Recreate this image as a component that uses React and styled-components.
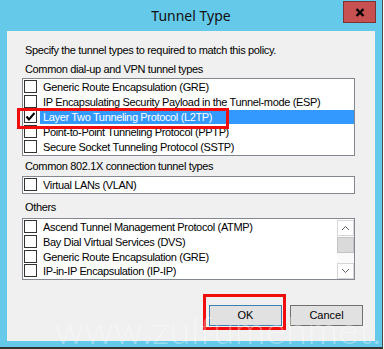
import React from "react";
import styled, { createGlobalStyle } from "styled-components";

const Global = createGlobalStyle`
  html, body { margin: 0; padding: 0; background: #ffffff; }
  body { font-family: "Liberation Sans", Arial, sans-serif; }
`;

const Window = styled.div`
  position: relative;
  width: 382px;
  height: 347px;
  background: #65c9ea;
  border-right: 1px solid #4a4a4a;
  border-bottom: 2px solid #333333;
  display: flex;
  flex-direction: column;
  overflow: hidden;
`;

const TitleBar = styled.div`
  height: 31px;
  display: grid;
  grid-template-columns: 1fr auto 1fr;
  align-items: start;
`;

const Title = styled.div`
  grid-column: 2;
  margin-top: 6px;
  font-family: "Noto Sans", "Open Sans", sans-serif;
  font-size: 14px;
  line-height: 20px;
  color: #111;
`;

const CloseBtn = styled.div`
  grid-column: 3;
  justify-self: end;
  margin: 1px 6px 0 0;
  width: 31px;
  height: 20px;
  background: #c75050;
  border: 1px solid #7d3434;
  display: flex;
  align-items: center;
  justify-content: center;
`;

const Panel = styled.div`
  height: 310px;
  margin: 0 7px 6px;
  background: #f0f0f0;
  padding: 0 12px 0 15px;
  display: flex;
  flex-direction: column;
  font-size: 11px;
  line-height: 13px;
  letter-spacing: -0.35px;
  color: #000;
`;

const Label = styled.div`
  padding-left: 3px;
  margin-top: ${(p) => p.$top}px;
  height: 13px;
  white-space: nowrap;
`;

const ListBox = styled.div`
  margin-top: ${(p) => p.$top}px;
  width: 333px;
  height: ${(p) => p.$h}px;
  box-sizing: border-box;
  border: 1px solid #828790;
  background: #fff;
  padding: 1px 0 0 1px;
  display: flex;
`;

const Rows = styled.div`
  flex: 1;
  display: flex;
  flex-direction: column;
`;

const Row = styled.div`
  height: 15px;
  display: flex;
  align-items: flex-start;
`;

const Box = styled.div`
  width: 13px;
  height: 13px;
  box-sizing: border-box;
  border: 1px solid #333;
  background: #fff;
  margin-right: 3px;
  flex: none;
  display: flex;
  align-items: center;
  justify-content: center;
`;

const RowText = styled.div`
  flex: 1;
  height: 14px;
  padding-left: 3px;
  line-height: 14px;
  white-space: nowrap;
  background: ${(p) => (p.$sel ? "#3399ff" : "transparent")};
  color: ${(p) => (p.$sel ? "#fff" : "#000")};
`;

const ScrollBar = styled.div`
  width: 17px;
  display: flex;
  flex-direction: column;
  background: #fafafa;
`;

const ScrollBtn = styled.div`
  height: 16px;
  box-sizing: border-box;
  border: 1px solid #d6d6d6;
  background: #fff;
  display: flex;
  align-items: center;
  justify-content: center;
`;

const Thumb = styled.div`
  height: 16px;
  margin-top: 1px;
  box-sizing: border-box;
  border: 1px solid #c4c4c4;
  background: #dadada;
`;

const Track = styled.div`
  flex: 1;
`;

const Buttons = styled.div`
  margin-top: 25px;
  display: flex;
  justify-content: flex-end;
  gap: 8px;
`;

const Button = styled.div`
  width: 73px;
  height: 21px;
  box-sizing: border-box;
  border: 1px solid ${(p) => (p.$def ? "#3c7fb1" : "#707070")};
  background: #e1e1e1;
  display: flex;
  align-items: center;
  justify-content: center;
  letter-spacing: 0;
`;

const Mark = styled.div`
  position: absolute;
  left: ${(p) => p.$x}px;
  top: ${(p) => p.$y}px;
  width: ${(p) => p.$w}px;
  height: ${(p) => p.$h}px;
  box-sizing: border-box;
  border: 3px solid #f20d0d;
  pointer-events: none;
`;

const Watermark = styled.div`
  position: absolute;
  left: 55px;
  top: 305px;
  font-family: "Lato", "Open Sans", sans-serif;
  font-weight: 300;
  font-size: 38px;
  line-height: 48px;
  letter-spacing: 0.5px;
  color: rgba(255, 255, 255, 0.35);
  white-space: nowrap;
  pointer-events: none;
`;

const Check = () => (
  <svg width="11" height="11" viewBox="0 0 11 11">
    <path d="M1.5 5.5 L4 8.5 L9.5 2" fill="none" stroke="#000" strokeWidth="2" />
  </svg>
);

const Chevron = ({ up }) => (
  <svg width="9" height="6" viewBox="0 0 9 6">
    <path d={up ? "M1 5 L4.5 1.5 L8 5" : "M1 1 L4.5 4.5 L8 1"} fill="none" stroke="#606060" strokeWidth="1" />
  </svg>
);

const dialup = [
  "Generic Route Encapsulation (GRE)",
  "IP Encapsulating Security Payload in the Tunnel-mode (ESP)",
  "Layer Two Tunneling Protocol (L2TP)",
  "Point-to-Point Tunneling Protocol (PPTP)",
  "Secure Socket Tunneling Protocol (SSTP)",
];

const others = [
  "Ascend Tunnel Management Protocol (ATMP)",
  "Bay Dial Virtual Services (DVS)",
  "Generic Route Encapsulation (GRE)",
  "IP-in-IP Encapsulation (IP-IP)",
];

const Item = ({ label, checked }) => (
  <Row>
    <Box>{checked && <Check />}</Box>
    <RowText $sel={checked}>{label}</RowText>
  </Row>
);

export default function App() {
  return (
    <>
      <Global />
      <Window>
        <TitleBar>
          <Title>Tunnel Type</Title>
          <CloseBtn>
            <svg width="10" height="9" viewBox="0 0 10 9">
              <path d="M1.5 1 L8.5 8 M8.5 1 L1.5 8" stroke="#000" strokeWidth="2.4" />
            </svg>
          </CloseBtn>
        </TitleBar>
        <Panel>
          <Label $top={13}>Specify the tunnel types to required to match this policy.</Label>
          <Label $top={6}>Common dial-up and VPN tunnel types</Label>
          <ListBox $top={2} $h={78}>
            <Rows>
              {dialup.map((t, i) => (
                <Item key={t} label={t} checked={i === 2} />
              ))}
            </Rows>
          </ListBox>
          <Label $top={4}>Common 802.1X connection tunnel types</Label>
          <ListBox $top={3} $h={18}>
            <Rows>
              <Item label="Virtual LANs (VLAN)" />
            </Rows>
          </ListBox>
          <Label $top={7}>Others</Label>
          <ListBox $top={4} $h={62}>
            <Rows>
              {others.map((t) => (
                <Item key={t} label={t} />
              ))}
            </Rows>
            <ScrollBar>
              <ScrollBtn><Chevron up /></ScrollBtn>
              <Thumb />
              <Track />
              <ScrollBtn><Chevron /></ScrollBtn>
            </ScrollBar>
          </ListBox>
          <Buttons>
            <Button $def>OK</Button>
            <Button>Cancel</Button>
          </Buttons>
        </Panel>
        <Mark $x={17} $y={108} $w={212} $h={21} />
        <Mark $x={203} $y={294} $w={83} $h={36} />
        <Watermark>www.zulfumehmet.com</Watermark>
      </Window>
    </>
  );
}
